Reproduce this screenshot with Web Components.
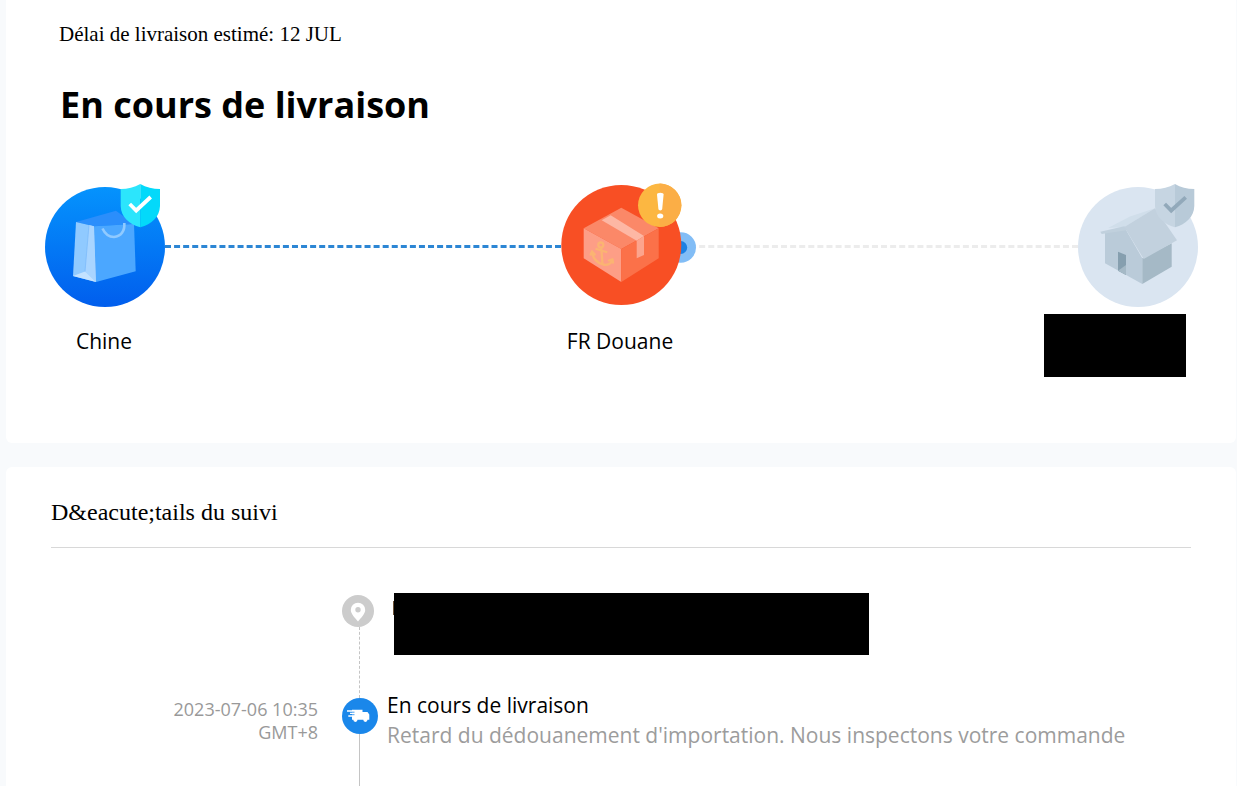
<!DOCTYPE html>
<html lang="fr">
<head>
<meta charset="utf-8">
<title>Suivi de livraison</title>
<style>
  body { margin: 0; height: 786px; overflow: hidden; background: #f8fafc; color: #000; font-family: "Open Sans", sans-serif; }
  main { display: flex; flex-direction: column; gap: 24px; padding: 0 1px 0 6px; }
</style>
</head>
<body>
<main>
  <tracking-card style="--height: 443px; --radius: 0 0 6px 6px">
    <delivery-status>
      <span slot="eta">Délai de livraison estimé: 12 JUL</span>
      En cours de livraison
    </delivery-status>
    <delivery-route>
      <route-stop icon="bag">Chine</route-stop>
      <route-line></route-line>
      <route-stop icon="box">FR Douane</route-stop>
      <route-line pending></route-line>
      <route-stop icon="home"><hidden-block style="--w: 142px; --h: 63px; margin: -11px 0 0 -33px"></hidden-block></route-stop>
    </delivery-route>
  </tracking-card>
  <tracking-card style="--height: 319px; --radius: 6px 6px 0 0">
    <section-title>D&amp;eacute;tails du suivi</section-title>
    <tracking-event icon="pin" style="--row: 105px">
      <hidden-block edge style="--w: 475px; --h: 62px; margin: 8px 0 0 7px"></hidden-block>
    </tracking-event>
    <tracking-event icon="truck" style="--row: 88px">
      <span slot="date">2023-07-06 10:35<br>GMT+8</span>
      <span slot="title">En cours de livraison</span>
      Retard du dédouanement d'importation. Nous inspectons votre commande
    </tracking-event>
  </tracking-card>
</main>

<script>
const icons = {
  bag: `
    <defs>
      <linearGradient id="g" x1="0" y1="0" x2="0" y2="1"><stop stop-color="#0593fd"/><stop offset="1" stop-color="#015eed"/></linearGradient>
    </defs>
    <circle cx="60" cy="64" r="60" fill="url(#g)"/>
    <path d="M31 39 71 27.7 89 41 49 43.3Z" fill="#2b8efb"/>
    <path d="M49 43.3 89 41 90.7 88.3 51 99Z" fill="#4ba7ff"/>
    <path d="M31 39 49 43.3 51 99 28 93Z" fill="#90caff"/>
    <path d="M44 42 49 43.3 51 99 40 88.5Z" fill="#a9d5ff"/>
    <path d="M28 93 40 88.5 51 99Z" fill="#c3e2ff"/>
    <path d="M44 42 40 88.5" stroke="#78b9fb" stroke-width=".7"/>
    <path d="M57.5 45.5C60 51 64 54 69 54C76 53.5 80 48 79.3 40" fill="none" stroke="#90caff" stroke-width="2.6"/>
    <path d="M95.3 1C89 4.5 83 6 75.7 6V23C76 34 84 41 95.3 44.3Z" fill="#2ce5fc"/>
    <path d="M95.3 1C101 4.5 108 6 115 6V23C114.5 34 107 41 95.3 44.3Z" fill="#03d9fa"/>
    <path d="M84.7 21 91.2 27.5 105.7 14" fill="none" stroke="#fff" stroke-width="3.8"/>`,
  box: `
    <circle cx="119.7" cy="64.5" r="15.3" fill="#82bdf6"/>
    <circle cx="119.7" cy="64.5" r="6.5" fill="#1c80e4"/>
    <circle cx="60.3" cy="62" r="60" fill="#f84f24"/>
    <path d="M60.3 24.7 97.7 45.3 60.3 66 22.7 45.3Z" fill="#fb8868"/>
    <path d="M22.7 45.3 60.3 66V99L22.7 75.3Z" fill="#fd9e86"/>
    <path d="M97.7 45.3 60.3 66V99L97.7 75.3Z" fill="#fb7149"/>
    <path d="M40.7 37.3 49.7 32.3 83 53 75.7 57.7Z" fill="#fdb7a4"/>
    <path d="M75.7 57.7 83 53V72L75.7 75.3Z" fill="#fca48d"/>
    <g fill="none" stroke="#fbb472" stroke-width="2.3" stroke-linecap="round" stroke-linejoin="round">
      <circle cx="39.8" cy="62" r="2.5"/>
      <path d="M40.3 65 41.5 81M35.5 66 45.3 69M31 68.5C31.5 75 36 80 42 81.5C47 82.5 50.5 80.5 51.3 76.5M29.8 71.5 31 68.5 33.8 71.5M48 77.5 51.5 76.3 52 79.5"/>
    </g>
    <circle cx="98.7" cy="22.3" r="21.7" fill="#fcb741"/>
    <path d="M98.7.6A21.7 21.7 0 0 1 98.7 44Z" fill="#fbae46"/>
    <path d="M96 11.5Q96 9.8 99.3 9.8T102.6 11.5L101.2 26Q101 27.4 99.3 27.4T97.4 26Z" fill="#fff"/>
    <ellipse cx="99.2" cy="33" rx="3.1" ry="2.5" fill="#fff"/>`,
  home: `
    <circle cx="60" cy="64" r="60" fill="#dae5f1"/>
    <path d="M30 45 52 33.5 77 25.3 46.3 44Z" fill="#d0deea"/>
    <path d="M46.3 44 27 49.3V80.3L64.3 101V75.3Z" fill="#bacbd9"/>
    <path d="M22.3 48.7 46.3 43.2 50 47 23.7 51Z" fill="#c0d0dd"/>
    <path d="M64.3 75.3 93.7 60.3V83.7L64.3 101Z" fill="#a5b9c6"/>
    <path d="M46.3 44 77 25.3 99 57.3 65.7 76Z" fill="#c2d1de"/>
    <path d="M40 68.7 48 72V92L40 87.7Z" fill="#869faf"/>
    <path d="M40 87.7 48 82V92Z" fill="#a5b9c6"/>
    <path d="M97 1C90.5 4.5 84.5 6 77 6V23C77.5 34 86 41 97 44.3Z" fill="#c6d5e2"/>
    <path d="M97 1C102.5 4.5 109 6 116.3 6V23C116 34 108 41 97 44.3Z" fill="#b8cad8"/>
    <path d="M86.7 21 93.2 27.5 107.7 14.3" fill="none" stroke="#92a9ba" stroke-width="3.8"/>`,
  pin: `
    <circle cx="16" cy="18" r="16" fill="#ccc"/>
    <path fill-rule="evenodd" d="M16 9.7a7.2 7.2 0 0 1 7.2 7.2c0 3.8-4 7.6-7.2 11.5C12.8 24.5 8.8 20.7 8.8 16.9a7.2 7.2 0 0 1 7.2-7.2Zm0 4.3a2.7 2.7 0 1 0 0 5.4 2.7 2.7 0 0 0 0-5.4Z" fill="#fff"/>`,
  truck: `
    <circle cx="18" cy="18" r="18" fill="#1a87ea"/>
    <path d="M10 11.7H20.5V14H25.5L27.3 16.5V21.8H25.5A2.1 2.1 0 0 1 21.3 21.8H15.5A2.1 2.1 0 0 1 11.3 21.8H10Z" fill="#fff"/>
    <path d="M5 13H10M8 15.4H12M6.3 18H11" stroke="#fff" stroke-width="1.4"/>
    <path d="M10 14.2H12.5M10 16.7H12.5" stroke="#1a87ea" stroke-width=".8"/>`
};

class TrackingElement extends HTMLElement {
  constructor() {
    super();
    this.attachShadow({ mode: 'open' });
  }
  connectedCallback() {
    this.shadowRoot.innerHTML = this.render();
  }
}

class TrackingCard extends TrackingElement {
  render() {
    return `
      <style>
        :host { display: block; box-sizing: border-box; height: var(--height); background: #fff; border-radius: var(--radius); overflow: hidden; }
      </style>
      <slot></slot>`;
  }
}

class DeliveryStatus extends TrackingElement {
  render() {
    return `
      <style>
        :host { display: block; padding: 22px 0 0 53px; }
        p { margin: 0; font: 21px/24px "Liberation Serif", serif; white-space: nowrap; }
        h1 { margin: 34px 0 0 1px; font-size: 36px; line-height: 50px; font-weight: 700; white-space: nowrap; }
      </style>
      <p><slot name="eta"></slot></p>
      <h1><slot></slot></h1>`;
  }
}

class DeliveryRoute extends TrackingElement {
  render() {
    return `
      <style>
        :host { display: grid; grid-template-columns: 120px 396px 120px 1fr 120px; width: 1153px; margin: 53px 0 0 39px; }
      </style>
      <slot></slot>`;
  }
}

class RouteStop extends TrackingElement {
  render() {
    return `
      <style>
        :host { display: block; position: relative; z-index: 1; }
        svg { display: block; overflow: visible; }
        div { margin: 18px 1px 0 -1px; font-size: 21px; line-height: 32px; text-align: center; white-space: nowrap; }
      </style>
      <svg width="120" height="124" viewBox="0 0 120 124">${icons[this.getAttribute('icon')]}</svg>
      <div><slot></slot></div>`;
  }
}

class RouteLine extends TrackingElement {
  render() {
    return `
      <style>
        :host { display: block; height: 0; margin-top: 62px; border-top: 3px dashed #2c86d4; }
        :host([pending]) { border-color: #ececec; }
      </style>`;
  }
}

class HiddenBlock extends TrackingElement {
  render() {
    return `
      <style>
        :host { display: flow-root; width: var(--w); height: var(--h); background: #000; }
        :host([edge])::before { content: ""; display: block; width: 1px; height: 14px; margin: 8px 0 0 -1px; background: #6b5238; }
      </style>`;
  }
}

class SectionTitle extends TrackingElement {
  render() {
    return `
      <style>
        :host { display: block; width: 1140px; height: 80px; margin-left: 45px; border-bottom: 1px solid #d8d8d8; }
        h2 { margin: 0; padding-top: 30px; font: 24px/30px "Liberation Serif", serif; }
      </style>
      <h2><slot></slot></h2>`;
  }
}

class TrackingEvent extends TrackingElement {
  render() {
    const pin = this.getAttribute('icon') === 'pin';
    return `
      <style>
        :host { display: grid; grid-template-columns: 312px 36px 1fr; column-gap: 24px; height: var(--row); }
        :host([icon="pin"]) { margin-top: 45px; }
        .date { color: #999; font-size: 18px; line-height: 23px; text-align: right; white-space: nowrap; }
        .marker { display: flex; flex-direction: column; align-items: flex-start; }
        svg { display: block; flex: none; overflow: visible; }
        i { flex: 1; margin-left: 17px; border-left: 1px solid #c4c4c4; }
        :host([icon="pin"]) i { border-left-style: dashed; }
        .body { margin: -8px 0 0 -15px; font-size: 21px; line-height: 30px; white-space: nowrap; }
        .text { color: #9c9c9c; }
      </style>
      <div class="date"><slot name="date"></slot></div>
      <div class="marker">
        <svg width="${pin ? 32 : 36}" height="${pin ? 34 : 36}">${icons[this.getAttribute('icon')]}</svg>
        <i></i>
      </div>
      <div class="body">
        ${pin ? '' : '<div class="title"><slot name="title"></slot></div>'}
        <div class="text"><slot></slot></div>
      </div>`;
  }
}

customElements.define('tracking-card', TrackingCard);
customElements.define('delivery-status', DeliveryStatus);
customElements.define('delivery-route', DeliveryRoute);
customElements.define('route-stop', RouteStop);
customElements.define('route-line', RouteLine);
customElements.define('hidden-block', HiddenBlock);
customElements.define('section-title', SectionTitle);
customElements.define('tracking-event', TrackingEvent);
</script>
</body>
</html>
